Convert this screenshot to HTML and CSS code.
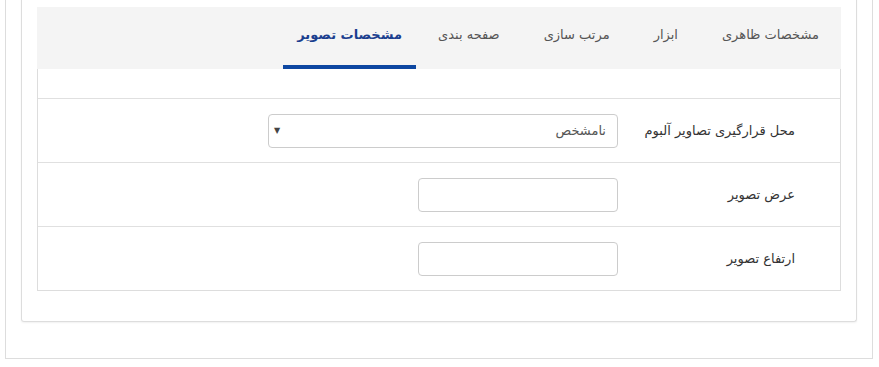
FILE: index.html
```html
<!DOCTYPE html>
<html lang="fa" dir="rtl">
<head>
  <meta charset="UTF-8" />
  <meta name="viewport" content="width=device-width, initial-scale=1" />
  <title>تنظیمات آلبوم</title>
  <link rel="stylesheet" href="styles.css">
</head>
<body>
  <div class="page">
    <div class="card">
      <div class="tabs">
        <a class="tab">مشخصات ظاهری</a>
        <a class="tab">ابزار</a>
        <a class="tab">مرتب سازی</a>
        <a class="tab">صفحه بندی</a>
        <a class="tab active">مشخصات تصویر</a>
      </div>

      <div class="tab-pane">
        <div class="row empty"></div>
        <div class="row">
          <label for="placeInput">محل قرارگیری تصاویر آلبوم</label>
          <div class="select-box" id="placeInput">
            <span>نامشخص</span>
            <span class="caret">▼</span>
          </div>
        </div>
        <div class="row">
          <label for="widthInput">عرض تصویر</label>
          <input type="text" id="widthInput">
        </div>
        <div class="row">
          <label for="heightInput">ارتفاع تصویر</label>
          <input type="text" id="heightInput">
        </div>
      </div>
    </div>
  </div>
</body>
</html>
```

FILE: styles.css
```css
body {
  margin: 0;
  font-family: "DejaVu Sans", sans-serif;
  font-size: 13px;
  color: #333;
  background: #fff;
}
.page {
  margin: -30px 6px 0 5px;
  height: 387px;
  border: 1px solid #ddd;
}
.card {
  margin: 0 15px;
  padding: 36px 15px 30px 15px;
  border: 1px solid #ddd;
  border-top: none;
  border-radius: 0 0 3px 3px;
  box-shadow: 0 1px 2px rgba(0, 0, 0, 0.06);
}
.tabs {
  display: flex;
  background: #f4f4f4;
  height: 62px;
}
.tab {
  padding: 0 22px;
  line-height: 56px;
  color: #555;
  border-bottom: 4px solid transparent;
  white-space: nowrap;
}
.tab.active {
  padding: 0 14px;
  color: #1b3f8f;
  font-weight: bold;
  border-bottom-color: #0d47a1;
}
.tab-pane {
  border: 1px solid #ddd;
  border-top: none;
}
.row {
  display: flex;
  align-items: center;
  height: 63px;
  border-top: 1px solid #e0e0e0;
  padding-right: 45px;
}
.row.empty {
  height: 29px;
  border-top: none;
}
label {
  width: 177px;
}
input[type="text"],
.select-box {
  height: 34px;
  box-sizing: border-box;
  border: 1px solid #ccc;
  border-radius: 4px;
  background: #fff;
  font-family: inherit;
  font-size: 13px;
  color: #555;
}
input[type="text"] {
  width: 200px;
  padding: 0 10px;
}
.select-box {
  width: 350px;
  display: flex;
  align-items: center;
  justify-content: space-between;
  padding: 0 11px 0 5px;
}
.caret {
  font-size: 8px;
  color: #444;
}
```
